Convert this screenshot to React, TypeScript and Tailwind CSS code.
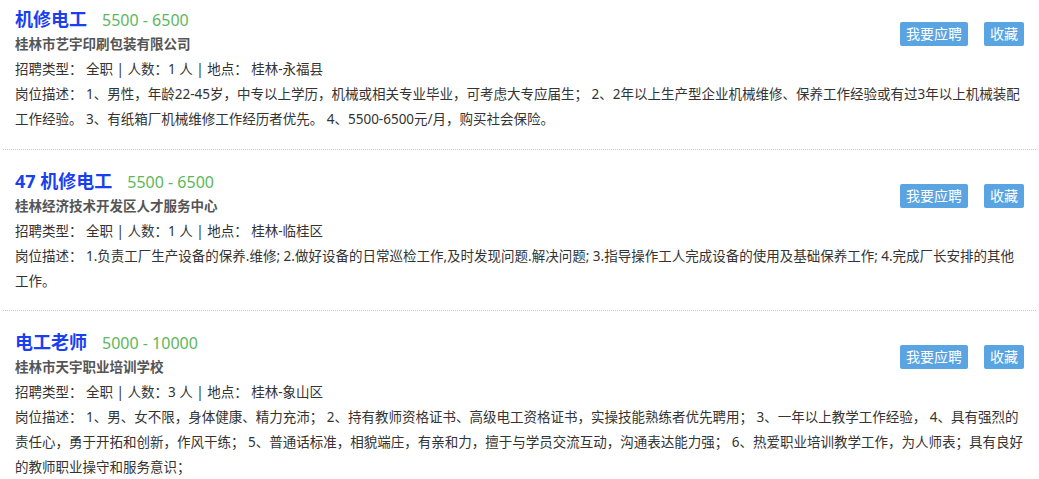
import React from "react";

type Job = {
  title: string;
  salary: string;
  company: string;
  type: string;
  count: string;
  place: string;
  desc: string;
};

const jobs: Job[] = [
  {
    title: "机修电工",
    salary: "5500 - 6500",
    company: "桂林市艺宇印刷包装有限公司",
    type: "全职",
    count: "1",
    place: "桂林-永福县",
    desc: "1、男性，年龄22-45岁，中专以上学历，机械或相关专业毕业，可考虑大专应届生； 2、2年以上生产型企业机械维修、保养工作经验或有过3年以上机械装配工作经验。 3、有纸箱厂机械维修工作经历者优先。 4、5500-6500元/月，购买社会保险。",
  },
  {
    title: "47 机修电工",
    salary: "5500 - 6500",
    company: "桂林经济技术开发区人才服务中心",
    type: "全职",
    count: "1",
    place: "桂林-临桂区",
    desc: "1.负责工厂生产设备的保养.维修; 2.做好设备的日常巡检工作,及时发现问题.解决问题; 3.指导操作工人完成设备的使用及基础保养工作; 4.完成厂长安排的其他工作。",
  },
  {
    title: "电工老师",
    salary: "5000 - 10000",
    company: "桂林市天宇职业培训学校",
    type: "全职",
    count: "3",
    place: "桂林-象山区",
    desc: "1、男、女不限，身体健康、精力充沛； 2、持有教师资格证书、高级电工资格证书，实操技能熟练者优先聘用； 3、一年以上教学工作经验， 4、具有强烈的责任心，勇于开拓和创新，作风干练； 5、普通话标准，相貌端庄，有亲和力，擅于与学员交流互动，沟通表达能力强； 6、热爱职业培训教学工作，为人师表；具有良好的教师职业操守和服务意识；",
  },
];

function JobItem({ job, first }: { job: Job; first: boolean }) {
  return (
    <div
      className={`border-b border-dotted border-[#c8c8c8] px-3 ${
        first ? "pt-[6px] pb-[17px]" : "pt-[18px] pb-4"
      }`}
    >
      <div className="flex items-start justify-between">
        <div>
          <div className="flex items-baseline h-[26px] leading-[26px]">
            <span className="text-[18px] font-bold text-[#1a3ff2]">{job.title}</span>
            <span className="ml-[15px] text-[16px] text-[#5cb85c]">{job.salary}</span>
          </div>
          <div className="text-[13.5px] leading-[25px] font-bold text-[#555]">{job.company}</div>
        </div>
        <div className="mt-4 flex gap-4">
          <button className="h-6 rounded-[2px] bg-[#5ba4e2] px-[6px] text-[14px] leading-6 text-white">
            我要应聘
          </button>
          <button className="h-6 rounded-[2px] bg-[#5ba4e2] px-[6px] text-[14px] leading-6 text-white">
            收藏
          </button>
        </div>
      </div>
      <div className="text-[13.5px] leading-[25px] text-[#333]">
        招聘类型：&nbsp;全职 | 人数：{job.count} 人 | 地点：&nbsp;{job.place}
      </div>
      <div className="text-[13.5px] leading-[25px] text-[#333]">岗位描述：&nbsp;{job.desc}</div>
    </div>
  );
}

export default function App() {
  return (
    <div
      className="min-h-screen bg-white px-[3px]"
      style={{ fontFamily: '"Noto Sans", "Noto Sans CJK SC", sans-serif' }}
    >
      {jobs.map((job, i) => (
        <JobItem key={i} job={job} first={i === 0} />
      ))}
    </div>
  );
}
